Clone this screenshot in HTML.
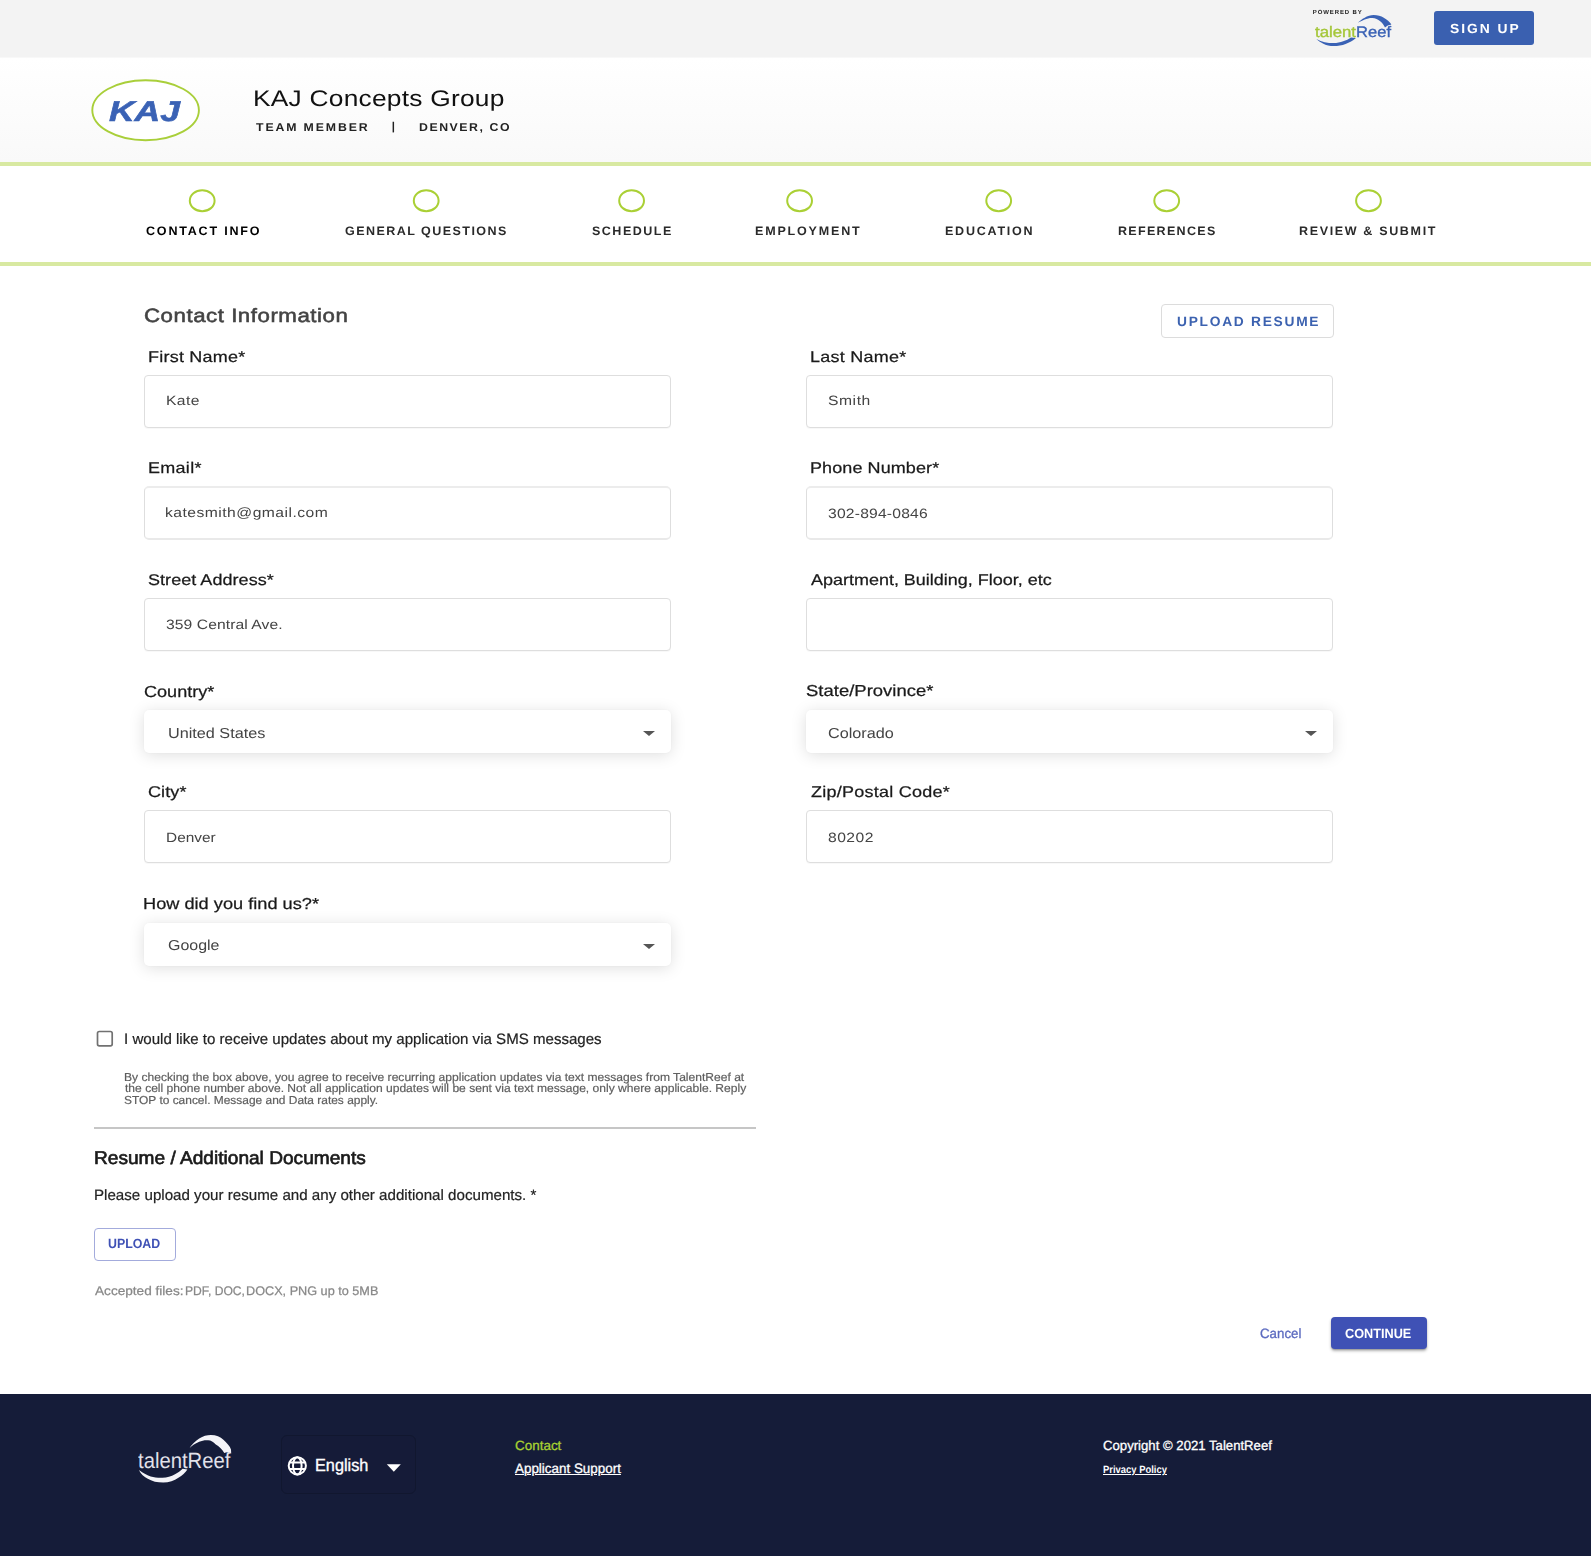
<!DOCTYPE html>
<html lang="en">
<head>
<meta charset="utf-8">
<title>KAJ Concepts Group - Contact Information</title>
<style>
*{box-sizing:border-box;margin:0;padding:0}
html,body{width:1591px;height:1556px;overflow:hidden;background:#fff}
body{position:relative;font-family:"Liberation Sans",sans-serif}
.a{position:absolute}
.t{position:absolute;white-space:nowrap;line-height:20px;transform-origin:0 0;display:block;text-rendering:geometricPrecision}
.g{position:absolute;left:0;top:0;width:1591px;height:1394px;will-change:transform}
.topbar{left:0;top:0;width:1591px;height:57px;background:#f3f3f3}
.hdr{left:0;top:57px;width:1591px;height:105px;background:linear-gradient(#ffffff,#f9f9f9)}
.gl{left:0;width:1591px;background:#d8e9a1}
.signup{left:1434px;top:11px;width:100px;height:34px;background:#3a60b0;border-radius:3px}
.inp{height:53px;border:1px solid #dedede;border-radius:4px;background:#fff;box-shadow:0 1px 1px rgba(0,0,0,.03)}
.inp2{height:54px;border:1px solid #dedede;border-top:2px solid #ececec;border-bottom:2px solid #e9e9e9;border-radius:5px;background:#fff}
.sel{height:43px;border-radius:5px;background:#fff;box-shadow:0 2px 16px rgba(0,0,0,.13),0 0 2px rgba(0,0,0,.04)}
.L{left:144px;width:527px}
.R{left:806px;width:527px}
.arr{width:0;height:0;border-left:6px solid transparent;border-right:6px solid transparent;border-top:5.5px solid #555}
.btn-o{border:1px solid #dcdcdc;border-radius:4px;background:#fff}
.footer{left:0;top:1394px;width:1591px;height:162px;background:#151c39}
</style>
</head>
<body>
<div class="a topbar"></div>
<div class="a hdr"></div>
<div class="a" style="left:0;top:57px;width:1591px;height:1px;background:#f8f8f8"></div>
<div class="a gl" style="top:162px;height:4px"></div>
<div class="a gl" style="top:262px;height:4px"></div>
<div class="a signup"></div>

<!-- powered-by logo -->
<svg class="a" style="left:1310px;top:12px" width="86" height="38" viewBox="0 0 86 38">
  <path d="M47.2 11.4 C49.5 9 52 7 54.7 5.7 C57.5 4 60.5 3 63.7 3 C67.5 3 71 4 73.8 5.7 C77 7.5 79.6 9.8 81.3 12.3 L81 12.8 C78.8 13 76.7 14 75 15.5 C73.8 13 72.2 10.9 70.2 9.3 C68 7.3 65.3 6.1 62.5 6 C59.7 5.9 57.1 6.5 54.7 7.5 C52 8.6 49.7 9.8 47.8 10.8 Z" fill="#3a62b5"/>
  <path d="M6.3 26.9 C8.2 28.8 10.4 30.3 12.9 31.4 C16.2 33.2 19.8 34.1 23.7 34.1 C28 34.1 32 33.4 35.6 32 C39.5 30.6 42.9 28.7 45.7 26.3 L45.7 26 L41 25.4 C38.7 27 36.1 28.3 33.2 29.3 C30.2 30.5 27 31.1 23.7 31.1 C20.5 31.1 17.5 30.8 14.7 30.2 C11.8 29.5 9.2 28.5 6.9 27.2 Z" fill="#3a62b5"/>
</svg>

<!-- KAJ ellipse -->
<svg class="a" style="left:88px;top:76px" width="116" height="68" viewBox="0 0 116 68">
  <ellipse cx="57.6" cy="34.2" rx="53.3" ry="30" fill="#fff" stroke="#a9cf3a" stroke-width="1.9"/>
</svg>

<!-- step circles -->
<svg class="a" style="left:0;top:186px" width="1591" height="30" viewBox="0 0 1591 30">
  <g fill="#fff" stroke="#aad035" stroke-width="2">
    <ellipse cx="202.2" cy="14.7" rx="12.4" ry="10.5"/>
    <ellipse cx="426.2" cy="14.7" rx="12.4" ry="10.5"/>
    <ellipse cx="631.6" cy="14.7" rx="12.4" ry="10.5"/>
    <ellipse cx="799.6" cy="14.7" rx="12.4" ry="10.5"/>
    <ellipse cx="998.7" cy="14.7" rx="12.4" ry="10.5"/>
    <ellipse cx="1166.7" cy="14.7" rx="12.4" ry="10.5"/>
    <ellipse cx="1368.5" cy="14.7" rx="12.4" ry="10.5"/>
  </g>
</svg>

<!-- upload resume button -->
<div class="a btn-o" style="left:1161px;top:304px;width:173px;height:34px"></div>

<!-- inputs -->
<div class="a inp L" style="top:375px"></div>
<div class="a inp R" style="top:375px"></div>
<div class="a inp2 L" style="top:486px"></div>
<div class="a inp2 R" style="top:486px"></div>
<div class="a inp L" style="top:598px"></div>
<div class="a inp R" style="top:598px"></div>
<div class="a sel L" style="top:710px"></div>
<div class="a sel R" style="top:710px"></div>
<div class="a inp L" style="top:810px"></div>
<div class="a inp R" style="top:810px"></div>
<div class="a sel L" style="top:923px"></div>
<div class="a arr" style="left:642.5px;top:730.5px"></div>
<div class="a arr" style="left:1305px;top:730.5px"></div>
<div class="a arr" style="left:642.5px;top:943.5px"></div>

<!-- checkbox -->
<svg class="a" style="left:94px;top:1028px" width="22" height="22" viewBox="0 0 22 22"><rect x="3.5" y="3.5" width="14.7" height="14.4" rx="1.8" fill="#fff" stroke="#717171" stroke-width="1.7"/></svg>
<!-- hr -->
<div class="a" style="left:94px;top:1127px;width:662px;height:2px;background:#c6c6c6"></div>
<!-- upload button -->
<div class="a" style="left:94px;top:1227.5px;width:81.5px;height:33.5px;border:1px solid #a3abdc;border-radius:4px;background:#fff"></div>
<!-- continue -->
<div class="a" style="left:1331px;top:1317px;width:96px;height:32px;border-radius:4px;background:#3f51b5;box-shadow:0 2px 3px rgba(0,0,0,.3),0 1px 1px rgba(0,0,0,.15)"></div>

<!-- footer -->
<div class="a footer"></div>
<div class="a" style="left:281px;top:1435px;width:135px;height:59px;border:1px solid #11172f;border-radius:6px;background:#151b38"></div>
<svg class="a" style="left:286px;top:1454px" width="24" height="24" viewBox="0 0 24 24">
  <g fill="none" stroke="#fff" stroke-width="2">
    <circle cx="11.3" cy="11.8" r="8.6"/>
    <ellipse cx="11.3" cy="11.8" rx="4.3" ry="8.6"/>
    <path d="M3.4 8.6h15.8M3.4 15h15.8"/>
  </g>
</svg>
<svg class="a" style="left:386px;top:1464px" width="16" height="9" viewBox="0 0 16 9"><path d="M0.8 0.2h14L7.8 7.7z" fill="#fff"/></svg>
<!-- footer logo swoosh -->
<svg class="a" style="left:134px;top:1430px" width="104" height="56" viewBox="0 0 104 56">
  <path d="M54.8 19.4 C57.5 14.5 61 11 65.2 8.4 C69 6 73 4.9 76.9 4.9 C82 4.9 86.5 6.8 89.4 9.8 C93 13.2 96 16.5 97 19.4 L97.2 23.5 C95 21.8 92.5 21.8 90.3 23 C88 19 85 16 81.8 14.4 C79.4 11.9 77 10.4 74.1 10.3 C71 10 68 10.6 65.2 11.8 C61 13.5 57.5 16 55.5 18.2 Z" fill="#f4f4f8"/>
  <path d="M5 40.2 C7 44 10 46.8 13.3 48.5 C18 51.4 23.5 52.6 29.2 52.6 C35 52.6 40.3 50.7 44.4 47.8 C48.2 45.5 51.4 42.7 53.4 39.5 L48.6 38.8 C46.5 41 44 42.8 41 44.3 C37.2 46.4 33 47.6 28.5 47.8 C24.3 48 20.3 47.5 16.7 46.4 C12.5 45 8.8 43 5.7 40.5 Z" fill="#f4f4f8"/>
</svg>

<div class="g">
<span class="t" style="left:1312.80px;top:3.00px;font-size:6.0px;color:#222;transform:scaleX(1.0000);letter-spacing:0.883px;font-weight:700;">POWERED BY</span>
<span class="t" style="left:1450.48px;top:19.00px;font-size:13.2px;color:#fff;transform:scaleX(1.0500);letter-spacing:1.856px;font-weight:700;">SIGN UP</span>
<span class="t" style="left:109.45px;top:102.00px;font-size:28.5px;color:#3a62b5;transform:scaleX(1.2449);font-weight:700;font-style:italic;-webkit-text-stroke:0.6px #3a62b5;">KAJ</span>
<span class="t" style="left:252.64px;top:88.00px;font-size:22.7px;color:#111;transform:scaleX(1.1600);letter-spacing:0.207px;">KAJ Concepts Group</span>
<span class="t" style="left:255.89px;top:118.00px;font-size:11.4px;color:#222;transform:scaleX(1.0800);letter-spacing:1.726px;font-weight:700;">TEAM MEMBER</span>
<span class="t" style="left:390.72px;top:117.00px;font-size:11.4px;color:#222;transform:scaleX(1.5789);">|</span>
<span class="t" style="left:418.69px;top:118.00px;font-size:11.4px;color:#222;transform:scaleX(1.0800);letter-spacing:1.430px;font-weight:700;">DENVER, CO</span>
<span class="t" style="left:146.29px;top:221.00px;font-size:12.3px;color:#000;transform:scaleX(1.0200);letter-spacing:1.750px;font-weight:700;">CONTACT INFO</span>
<span class="t" style="left:345.09px;top:221.00px;font-size:12.3px;color:#2a2a2a;transform:scaleX(1.0200);letter-spacing:1.407px;font-weight:700;">GENERAL QUESTIONS</span>
<span class="t" style="left:592.34px;top:221.00px;font-size:12.3px;color:#2a2a2a;transform:scaleX(1.0200);letter-spacing:1.444px;font-weight:700;">SCHEDULE</span>
<span class="t" style="left:755.38px;top:221.00px;font-size:12.3px;color:#2a2a2a;transform:scaleX(1.0200);letter-spacing:1.766px;font-weight:700;">EMPLOYMENT</span>
<span class="t" style="left:945.48px;top:221.00px;font-size:12.3px;color:#2a2a2a;transform:scaleX(1.0200);letter-spacing:1.712px;font-weight:700;">EDUCATION</span>
<span class="t" style="left:1117.98px;top:221.00px;font-size:12.3px;color:#2a2a2a;transform:scaleX(1.0200);letter-spacing:1.256px;font-weight:700;">REFERENCES</span>
<span class="t" style="left:1299.38px;top:221.00px;font-size:12.3px;color:#2a2a2a;transform:scaleX(1.0200);letter-spacing:1.598px;font-weight:700;">REVIEW &amp; SUBMIT</span>
<span class="t" style="left:143.96px;top:307.00px;font-size:19.2px;color:#444;transform:scaleX(1.1600);letter-spacing:0.457px;-webkit-text-stroke:0.55px #444;">Contact Information</span>
<span class="t" style="left:1176.55px;top:312.00px;font-size:13.5px;color:#3c62b0;transform:scaleX(1.0200);letter-spacing:1.686px;font-weight:700;">UPLOAD RESUME</span>
<span class="t" style="left:147.50px;top:348.00px;font-size:15.5px;color:#1a1a1a;transform:scaleX(1.1600);letter-spacing:0.203px;-webkit-text-stroke:0.25px #1a1a1a;">First Name*</span>
<span class="t" style="left:809.70px;top:348.00px;font-size:15.5px;color:#1a1a1a;transform:scaleX(1.1600);letter-spacing:0.213px;-webkit-text-stroke:0.25px #1a1a1a;">Last Name*</span>
<span class="t" style="left:147.50px;top:459.00px;font-size:15.5px;color:#1a1a1a;transform:scaleX(1.1600);letter-spacing:0.259px;-webkit-text-stroke:0.25px #1a1a1a;">Email*</span>
<span class="t" style="left:809.70px;top:459.00px;font-size:15.5px;color:#1a1a1a;transform:scaleX(1.1600);letter-spacing:0.088px;-webkit-text-stroke:0.25px #1a1a1a;">Phone Number*</span>
<span class="t" style="left:148.34px;top:571.00px;font-size:15.5px;color:#1a1a1a;transform:scaleX(1.1600);letter-spacing:0.049px;-webkit-text-stroke:0.25px #1a1a1a;">Street Address*</span>
<span class="t" style="left:811.10px;top:571.00px;font-size:15.5px;color:#1a1a1a;transform:scaleX(1.1592);-webkit-text-stroke:0.25px #1a1a1a;">Apartment, Building, Floor, etc</span>
<span class="t" style="left:143.85px;top:683.00px;font-size:15.9px;color:#1a1a1a;transform:scaleX(1.1365);-webkit-text-stroke:0.25px #1a1a1a;">Country*</span>
<span class="t" style="left:806.02px;top:682.00px;font-size:15.9px;color:#1a1a1a;transform:scaleX(1.1600);letter-spacing:0.025px;-webkit-text-stroke:0.25px #1a1a1a;">State/Province*</span>
<span class="t" style="left:148.06px;top:783.00px;font-size:15.5px;color:#1a1a1a;transform:scaleX(1.1600);letter-spacing:0.094px;-webkit-text-stroke:0.25px #1a1a1a;">City*</span>
<span class="t" style="left:810.54px;top:783.00px;font-size:15.5px;color:#1a1a1a;transform:scaleX(1.1600);letter-spacing:0.218px;-webkit-text-stroke:0.25px #1a1a1a;">Zip/Postal Code*</span>
<span class="t" style="left:143.28px;top:895.00px;font-size:15.9px;color:#1a1a1a;transform:scaleX(1.1449);-webkit-text-stroke:0.25px #1a1a1a;">How did you find us?*</span>
<span class="t" style="left:165.58px;top:391.00px;font-size:13.5px;color:#444;transform:scaleX(1.1600);letter-spacing:0.329px;">Kate</span>
<span class="t" style="left:828.21px;top:391.00px;font-size:13.5px;color:#444;transform:scaleX(1.1600);letter-spacing:0.483px;">Smith</span>
<span class="t" style="left:165.42px;top:503.00px;font-size:13.5px;color:#444;transform:scaleX(1.1600);letter-spacing:0.408px;">katesmith@gmail.com</span>
<span class="t" style="left:828.21px;top:504.00px;font-size:13.5px;color:#444;transform:scaleX(1.1600);letter-spacing:0.172px;">302-894-0846</span>
<span class="t" style="left:166.31px;top:615.00px;font-size:13.5px;color:#444;transform:scaleX(1.1600);letter-spacing:0.066px;">359 Central Ave.</span>
<span class="t" style="left:167.69px;top:724.00px;font-size:14.5px;color:#444;transform:scaleX(1.1180);">United States</span>
<span class="t" style="left:828.24px;top:724.00px;font-size:14.5px;color:#444;transform:scaleX(1.1168);">Colorado</span>
<span class="t" style="left:165.60px;top:828.00px;font-size:13.5px;color:#444;transform:scaleX(1.1416);">Denver</span>
<span class="t" style="left:828.21px;top:828.00px;font-size:13.5px;color:#444;transform:scaleX(1.1600);letter-spacing:0.405px;">80202</span>
<span class="t" style="left:168.45px;top:936.00px;font-size:14.5px;color:#444;transform:scaleX(1.0992);">Google</span>
<span class="t" style="left:123.52px;top:1030.00px;font-size:15.1px;color:#222;transform:scaleX(0.9988);-webkit-text-stroke:0.2px #222;">I would like to receive updates about my application via SMS messages</span>
<span class="t" style="left:123.71px;top:1068.00px;font-size:11.6px;color:#5c5c5c;transform:scaleX(1.0408);-webkit-text-stroke:0.2px #666;">By checking the box above, you agree to receive recurring application updates via text messages from TalentReef at</span>
<span class="t" style="left:124.54px;top:1079.00px;font-size:11.6px;color:#5c5c5c;transform:scaleX(1.0409);-webkit-text-stroke:0.2px #666;">the cell phone number above. Not all application updates will be sent via text message, only where applicable. Reply</span>
<span class="t" style="left:124.19px;top:1091.00px;font-size:11.6px;color:#5c5c5c;transform:scaleX(1.0295);-webkit-text-stroke:0.2px #666;">STOP to cancel. Message and Data rates apply.</span>
<span class="t" style="left:93.51px;top:1148.00px;font-size:18.3px;color:#1a1a1a;transform:scaleX(1.0447);-webkit-text-stroke:0.65px #1a1a1a;">Resume / Additional Documents</span>
<span class="t" style="left:93.52px;top:1186.00px;font-size:15.0px;color:#222;transform:scaleX(1.0086);-webkit-text-stroke:0.2px #222;">Please upload your resume and any other additional documents. *</span>
<span class="t" style="left:108.32px;top:1234.00px;font-size:13.3px;color:#3f51b5;transform:scaleX(0.9297);font-weight:700;">UPLOAD</span>
<span class="t" style="left:94.50px;top:1281.00px;font-size:12.5px;color:#888;transform:scaleX(1.0889);-webkit-text-stroke:0.25px #888;">Accepted files:</span>
<span class="t" style="left:184.63px;top:1281.00px;font-size:12.5px;color:#888;transform:scaleX(0.9701);-webkit-text-stroke:0.25px #888;">PDF, DOC,</span>
<span class="t" style="left:245.69px;top:1281.00px;font-size:12.5px;color:#888;transform:scaleX(1.0135);-webkit-text-stroke:0.25px #888;">DOCX, PNG up to 5MB</span>
<span class="t" style="left:1260.08px;top:1324.00px;font-size:13.5px;color:#5c6bc0;transform:scaleX(0.9852);-webkit-text-stroke:0.3px #5c6bc0;">Cancel</span>
<span class="t" style="left:1345.20px;top:1324.00px;font-size:13.4px;color:#fff;transform:scaleX(0.9479);font-weight:700;">CONTINUE</span>
<span class="t" style="left:1314.90px;top:23.00px;font-size:15.2px;color:#a4c639;transform:scaleX(1.1038);-webkit-text-stroke:0.35px #a4c639;">talent</span>
<span class="t" style="left:1355.70px;top:23.00px;font-size:15.2px;color:#3a62b5;transform:scaleX(1.0913);-webkit-text-stroke:0.35px #3a62b5;">Reef</span>
</div>
<span class="t" style="left:315.43px;top:1455.00px;font-size:17.4px;color:#fff;transform:scaleX(0.9355);-webkit-text-stroke:0.35px #fff;">English</span>
<span class="t" style="left:514.87px;top:1436.00px;font-size:13.4px;color:#a8d232;transform:scaleX(1.0044);-webkit-text-stroke:0.3px #a8d232;">Contact</span>
<span class="t" style="left:515.30px;top:1459.00px;font-size:13.6px;color:#fff;transform:scaleX(0.9869);text-decoration:underline;-webkit-text-stroke:0.3px #fff;">Applicant Support</span>
<span class="t" style="left:1102.98px;top:1436.00px;font-size:13.4px;color:#fff;transform:scaleX(0.9826);-webkit-text-stroke:0.3px #fff;">Copyright © 2021 TalentReef</span>
<span class="t" style="left:1102.97px;top:1460.00px;font-size:10.5px;color:#fff;transform:scaleX(0.8982);font-weight:700;text-decoration:underline;">Privacy Policy</span>
<span class="t" style="left:138.10px;top:1451.00px;font-size:22px;color:#e2e2ea;transform:scaleX(0.9206);">talentReef</span>
</body>
</html>
